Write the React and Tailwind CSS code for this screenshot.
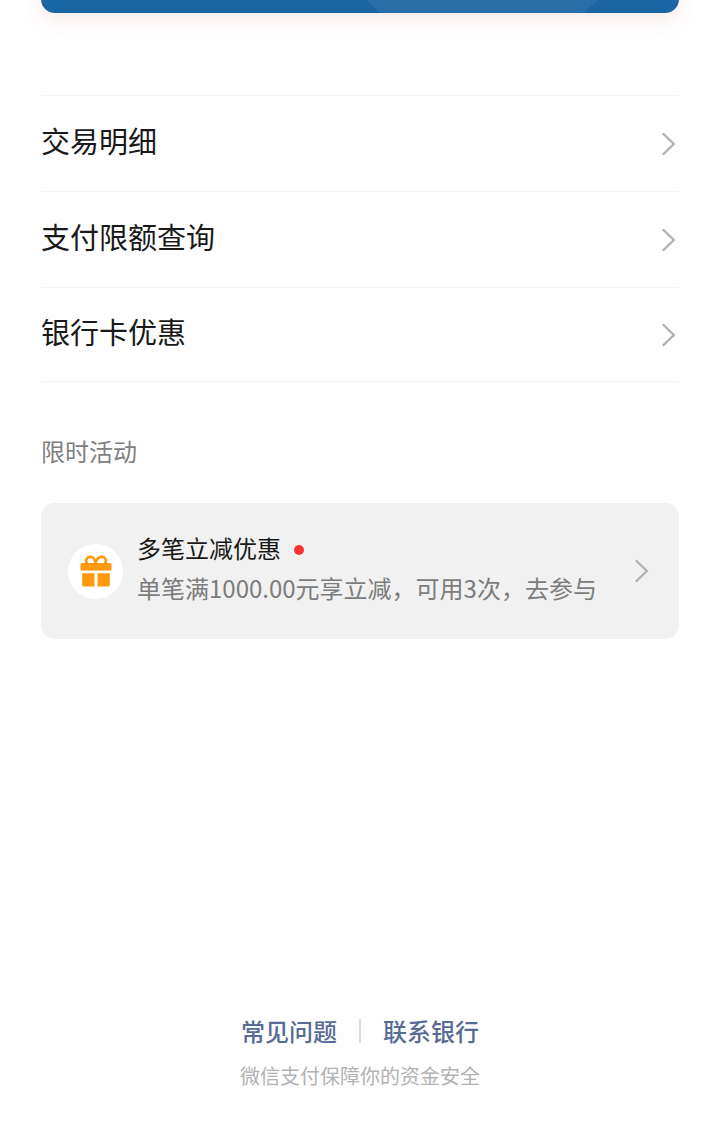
const menuItems = [
  { id: 'transactions', label: '交易明细' },
  { id: 'limits', label: '支付限额查询' },
  { id: 'offers', label: '银行卡优惠' },
]

function Chevron() {
  return (
    <svg
      aria-hidden="true"
      viewBox="0 0 14 24"
      className="h-6 w-[14px] shrink-0 text-[#b2b2b2]"
      fill="none"
      stroke="currentColor"
      strokeWidth="2.4"
      strokeLinecap="round"
    >
      <path d="M1.5 2 11.8 12 1.5 22" />
    </svg>
  )
}

function GiftIcon() {
  return (
    <svg aria-hidden="true" viewBox="0 0 32 33" className="h-[33px] w-8" fill="#ff9a0f">
      <g fill="none" stroke="#ff9a0f" strokeWidth="2.6">
        <path d="M8 9.500C6.300 8.300 5.900 6.600 6.200 5.300 6.700 3.200 8.300 1.900 10.300 1.900c3 0 4.700 2.600 5.200 6.500" />
        <path d="M24 9.500c1.700-1.200 2.100-2.900 1.800-4.200-.5-2.100-2.100-3.400-4.100-3.400-3 0-5.200 2.600-6.200 6.500" />
      </g>
      <path d="M2 8h28a1.500 1.500 0 0 1 1.500 1.500v6H.5v-6A1.500 1.500 0 0 1 2 8Z" />
      <path d="M2.200 18.200h12.300v13.400H3.700a1.500 1.500 0 0 1-1.500-1.500Z" />
      <path d="M17.500 18.200h12.300v11.900a1.500 1.500 0 0 1-1.500 1.500H17.500Z" />
    </svg>
  )
}

function BankCard() {
  return (
    <div className="relative -mt-[200px] h-[213px] rounded-[14px] bg-[#1a66a5] shadow-[0_8px_18px_rgba(190,100,80,0.11)]">
      <div className="absolute inset-0 overflow-hidden rounded-[14px]">
        <div className="absolute -bottom-9 left-[280px] size-[322px] rounded-full bg-[#286ea9]" />
      </div>
    </div>
  )
}

function MenuList() {
  return (
    <nav className="mt-[82px] border-b border-[#f2f2f2]">
      {menuItems.map((item) => (
        <a
          key={item.id}
          href={`#${item.id}`}
          className="flex h-24 items-center justify-between border-t border-[#f2f2f2] pr-[3px] last:h-[94px]"
        >
          <span className="pb-2 text-[29px] leading-10 text-[#191919]">{item.label}</span>
          <Chevron />
        </a>
      ))}
    </nav>
  )
}

function Promotion() {
  return (
    <section className="mt-[51px]">
      <h2 className="text-2xl leading-9 text-[#7f7f7f]">限时活动</h2>
      <a
        href="#promotion"
        className="mt-[34px] flex h-[136px] items-center rounded-[14px] bg-[#f1f1f1] pr-[30px] pl-[27px]"
      >
        <span className="flex size-[55px] shrink-0 items-center justify-center rounded-full bg-white">
          <GiftIcon />
        </span>
        <span className="ml-[14px] flex-1 pb-1.5 text-2xl leading-10">
          <span className="flex items-center gap-[13px] text-[#191919]">
            多笔立减优惠
            <span className="mt-1 size-[10px] rounded-full bg-[#fa3434]" />
          </span>
          <span className="block text-[#7c7c7c]">单笔满1000.00元享立减，可用3次，去参与</span>
        </span>
        <Chevron />
      </a>
    </section>
  )
}

function Footer() {
  return (
    <footer className="mt-auto flex flex-col items-center pb-11">
      <div className="flex items-center gap-[22px] text-2xl leading-9 font-medium text-[#576b95]">
        <a href="#faq">常见问题</a>
        <span className="h-6 w-0.5 bg-[#dedede]" />
        <a href="#contact">联系银行</a>
      </div>
      <p className="mt-[13px] text-xl leading-7 text-[#b2b2b2]">微信支付保障你的资金安全</p>
    </footer>
  )
}

export default function App() {
  return (
    <main
      lang="zh-CN"
      className="flex min-h-screen flex-col overflow-hidden bg-[#fefefe] px-[41px] font-['Noto_Sans_CJK_SC',sans-serif]"
    >
      <BankCard />
      <MenuList />
      <Promotion />
      <Footer />
    </main>
  )
}
